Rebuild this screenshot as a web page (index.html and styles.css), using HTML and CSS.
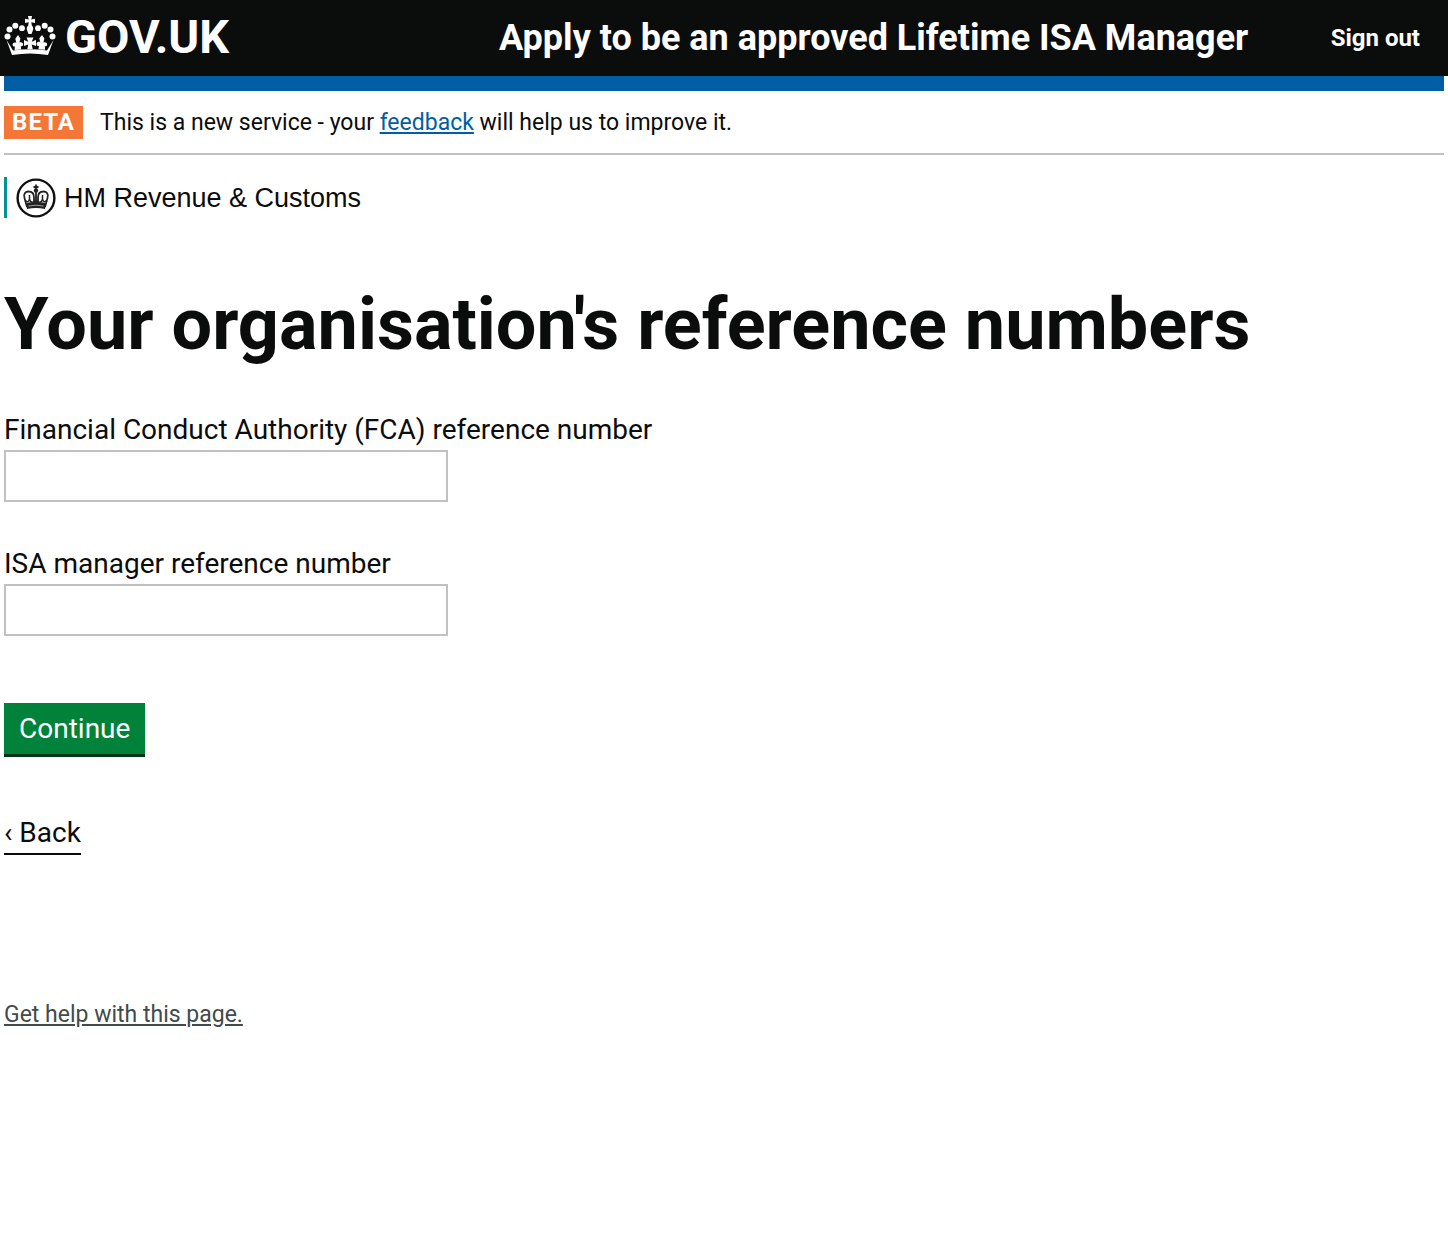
FILE: index.html
```html
<!DOCTYPE html>
<html lang="en">
<head>
<meta charset="utf-8">
<meta name="viewport" content="width=device-width, initial-scale=1">
<title>Your organisation's reference numbers</title>
<link rel="stylesheet" href="styles.css">
</head>
<body>
<header class="site-header">
  <a class="logo" href="#">
    <svg class="logo-crown" viewBox="0 0 52 40" aria-hidden="true">
      <g fill="#fff">
        <circle cx="3.5" cy="20.5" r="3"/><circle cx="5.5" cy="13.5" r="3"/><circle cx="11.3" cy="9.7" r="3"/><circle cx="18" cy="12.2" r="2.9"/>
        <circle cx="48.5" cy="20.5" r="3"/><circle cx="46.5" cy="13.5" r="3"/><circle cx="40.7" cy="9.7" r="3"/><circle cx="34" cy="12.2" r="2.9"/>
        <path d="M24 0h4l-.7 3.500 3.700-.8v4.200l-3.700-.7.500 3.200c1.400 1 1.800 2.900 1.200 4.600l-1.500 4h-3l-1.500-4c-.6-1.700-.2-3.600 1.200-4.600l.5-3.200-3.700.7V2.700l3.700.8z"/>
        <path d="M2.500 24 8 39Q26 36 44 39L49.500 24 43 34.500Q26 32 9 34.500z"/>
        <path d="M14 19l2.400 3.500-1 4c2-1 4.100.2 3.700 2.200-.3 1.300-1.400 1.700-2.300 1.500l.4 3.300-6.600.5.300-3.500c-1 .2-2-.4-2.300-1.500-.4-2 1.700-3.200 3.700-2.200l-1-4z"/>
        <path d="M38 19l2.400 3.500-1 4c2-1 4.100.2 3.700 2.200-.3 1.100-1.300 1.700-2.300 1.500l.3 3.500-6.600-.5.400-3.300c-.9.200-2-.2-2.300-1.500-.4-2 1.700-3.200 3.700-2.200l-1-4z"/>
        <path d="M22.500 21.500h7l-1.800 4.200 4.300-1.700v6l-4.300-1.500 1 4.500h-5.400l1-4.500L20 30v-6l4.300 1.700z"/>
      </g>
    </svg>
    <span>GOV.UK</span>
  </a>
  <a class="service-name" href="#">Apply to be an approved Lifetime ISA Manager</a>
  <a class="sign-out" href="#">Sign out</a>
</header>
<div class="page">
  <div class="header-bar"></div>
  <div class="phase-banner">
    <strong class="phase-tag">BETA</strong>
    <span>This is a new service - your <a class="feedback" href="#">feedback</a> will help us to improve it.</span>
  </div>
  <div class="organisation">
    <svg class="crest" viewBox="0 0 40 40" aria-hidden="true">
      <circle cx="20" cy="20" r="18.4" fill="#fff" stroke="#111" stroke-width="2.400"/>
      <g fill="none" stroke="#222" stroke-width="1.800">
        <path d="M11 29 8.500 20c-1.500-4 1-6.500 4-6.500 3.500 0 5.500 2 5.500 6v5M29 29l2.500-9c1.500-4-1-6.500-4-6.500-3.500 0-5.500 2-5.500 6v5"/>
        <path d="M20 6.500v18M17.500 9h5"/>
        <path d="M9.500 22.500q3 3 4-1.500 1 5 6.500 2 5.500 3 6.500-2 1 4.500 4 1.500M13.500 17v6M26.500 17v6" stroke-width="1.500"/>
      </g>
      <path d="M10 25Q20 23 30 25L29 31Q20 29 11 31z" fill="#222"/>
      <path d="M12.500 28Q20 26.400 27.500 28" fill="none" stroke="#bbb" stroke-width=".8"/>
      <circle cx="20" cy="12.500" r="2.200" fill="#222"/>
    </svg>
    <span>HM Revenue &amp; Customs</span>
  </div>
  <main>
    <h1>Your organisation's reference numbers</h1>
    <form>
      <div class="field">
        <label for="fca">Financial Conduct Authority (FCA) reference number</label>
        <input id="fca" type="text">
      </div>
      <div class="field">
        <label for="isa">ISA manager reference number</label>
        <input id="isa" type="text">
      </div>
      <button class="continue" type="submit">Continue</button>
    </form>
    <a class="back" href="#">‹ Back</a>
  </main>
  <a class="help" href="#">Get help with this page.</a>
</div>
</body>
</html>
```
FILE: styles.css
```css
* { box-sizing: border-box; }
body {
  margin: 0;
  background: #fff;
  color: #0b0c0c;
  font: 28px/36px Roboto, sans-serif;
}
.site-header {
  display: grid;
  grid-template-columns: 495px 1fr auto;
  align-items: center;
  height: 76px;
  padding: 0 28px 0 4px;
  background: #0b0c0c;
  font-weight: 700;
}
.site-header a { color: #fff; text-decoration: none; }
.logo { display: flex; align-items: center; gap: 9px; padding-bottom: 3px; font-size: 47px; line-height: 48px; }
.logo-crown { width: 52px; height: 40px; margin-bottom: 2px; }
.service-name { font-size: 36px; }
.sign-out { font-size: 24px; }
.page { padding: 0 4px; }
.header-bar { height: 15px; background: #005ea5; }
.phase-banner {
  display: flex;
  align-items: center;
  gap: 17px;
  padding: 15px 0 14px;
  border-bottom: 2px solid #bfc1c3;
  font-size: 23px;
  line-height: 33px;
}
.phase-tag {
  min-width: 79px;
  background: #f47738;
  color: #fff;
  font-size: 24px;
  letter-spacing: 1px;
  text-align: center;
}
.feedback { color: #005ea5; }
.organisation {
  display: flex;
  align-items: center;
  gap: 8px;
  height: 41px;
  margin-top: 22px;
  padding-left: 9px;
  border-left: 3px solid #009390;
  font: 27px/40px "Liberation Sans", sans-serif;
}
.crest { width: 40px; height: 40px; }
h1 { margin: 67px 0 45px; font-size: 72px; line-height: 80px; font-weight: 700; }
.field { margin-bottom: 42px; }
.field label { display: block; line-height: 40px; }
.field input {
  display: block;
  width: 444px;
  height: 52px;
  padding: 6px 8px;
  border: 2px solid #bfc1c3;
  font: inherit;
}
.continue {
  display: block;
  height: 54px;
  margin-top: 67px;
  padding: 0 15px;
  border: 0;
  border-bottom: 3px solid #003618;
  background: #00823b;
  color: #fff;
  font: inherit;
}
.back {
  display: inline-block;
  margin-top: 58px;
  padding-bottom: 2px;
  border-bottom: 2px solid #0b0c0c;
  color: #0b0c0c;
  text-decoration: none;
}
.help { display: block; width: fit-content; margin-top: 142px; color: #434a4c; font-size: 23px; }
```
